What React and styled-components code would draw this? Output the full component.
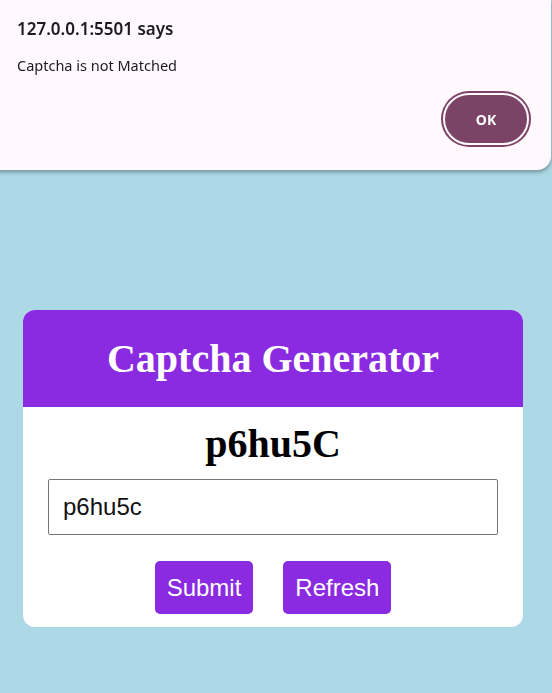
import React, { useState } from "react";
import styled, { createGlobalStyle } from "styled-components";

const GlobalStyle = createGlobalStyle`
  * {
    box-sizing: border-box;
  }
  html, body {
    margin: 0;
    padding: 0;
    background: #add8e6;
    min-height: 693px;
  }
`;

const Page = () => {
  const [captcha] = useState("p6hu5C");
  const [value, setValue] = useState("p6hu5c");

  return (
    <>
      <GlobalStyle />
      <StyledPage>
        <StyledCard>
          <StyledHeader>
            <h1>Captcha Generator</h1>
          </StyledHeader>
          <StyledCode>{captcha}</StyledCode>
          <StyledInput value={value} onChange={(e) => setValue(e.target.value)} />
          <StyledActions>
            <Button>Submit</Button>
            <Button>Refresh</Button>
          </StyledActions>
        </StyledCard>
      </StyledPage>

      <StyledAlert>
        <AlertTitle>127.0.0.1:5501 says</AlertTitle>
        <AlertMessage>Captcha is not Matched</AlertMessage>
        <AlertFooter>
          <OkButton>OK</OkButton>
        </AlertFooter>
      </StyledAlert>
    </>
  );
};

const StyledPage = styled.main`
  display: flex;
  padding: 310px 0 0 23px;
  height: 693px;
`;

const StyledCard = styled.section`
  width: 500px;
  align-self: flex-start;
  background: #fff;
  border-radius: 12px;
  overflow: hidden;
  padding-bottom: 13px;
  display: flex;
  flex-direction: column;
  align-items: center;
`;

const StyledHeader = styled.header`
  width: 100%;
  height: 97px;
  background: #8a2be2;
  display: flex;
  align-items: center;
  justify-content: center;

  h1 {
    margin: 0;
    color: #fff;
    font-family: "Liberation Serif", "Times New Roman", serif;
    font-size: 40px;
    font-weight: 700;
    line-height: 46px;
  }
`;

const StyledCode = styled.div`
  margin: 14px 0 12px;
  font-family: "Liberation Serif", "Times New Roman", serif;
  font-size: 40px;
  font-weight: 700;
  line-height: 46px;
  color: #000;
`;

const StyledInput = styled.input`
  width: 450px;
  height: 56px;
  border: 1px solid #767676;
  border-radius: 2px;
  padding: 0 14px;
  font-family: "Liberation Sans", Arial, sans-serif;
  font-size: 24px;
  color: #111;
  outline: none;
`;

const StyledActions = styled.div`
  display: flex;
  gap: 30px;
  margin-top: 26px;
`;

const Button = styled.button`
  height: 53px;
  padding: 0 12px;
  border: none;
  border-radius: 5px;
  background: #8a2be2;
  color: #fff;
  font-family: "Liberation Sans", Arial, sans-serif;
  font-size: 24px;
  cursor: pointer;
`;

const StyledAlert = styled.div`
  position: fixed;
  top: 0;
  left: -14px;
  right: 1px;
  height: 170px;
  background: #fff8fd;
  border-bottom-right-radius: 14px;
  box-shadow: 0 2px 4px rgba(0, 0, 0, 0.35);
  padding: 16px 22px 0 31px;
  display: flex;
  flex-direction: column;
  font-family: "Noto Sans", "Open Sans", sans-serif;
  color: #1d1b1e;
`;

const AlertTitle = styled.div`
  font-size: 17px;
  font-weight: 600;
  line-height: 26px;
`;

const AlertMessage = styled.div`
  margin-top: 13px;
  font-size: 14.5px;
  line-height: 20px;
`;

const AlertFooter = styled.div`
  display: flex;
  justify-content: flex-end;
  margin-top: 18px;
`;

const OkButton = styled.button`
  width: 86px;
  height: 52px;
  border: 2px solid #fff8fd;
  border-radius: 26px;
  background: #7b4466;
  box-shadow: 0 0 0 2px #7b4466;
  color: #fff;
  font-family: "Noto Sans", "Open Sans", sans-serif;
  font-size: 14px;
  font-weight: 700;
`;

export default Page;
